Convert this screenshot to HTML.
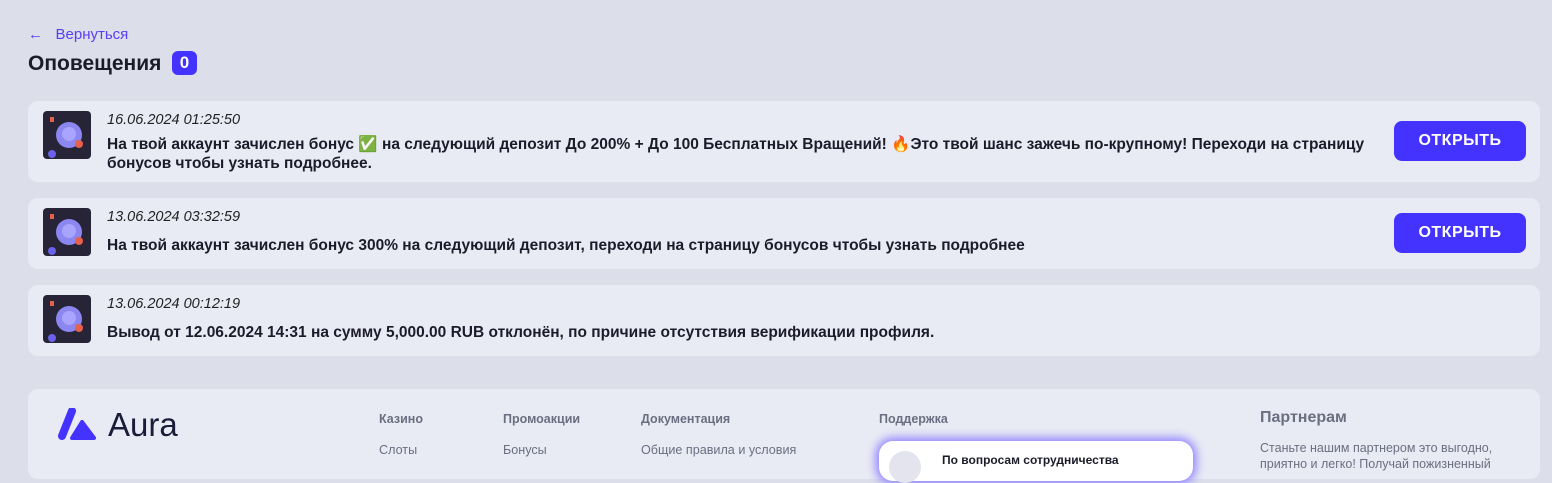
<!DOCTYPE html><html><head><meta charset="utf-8"><style>
*{margin:0;padding:0;box-sizing:border-box}
body{width:1552px;height:462px;overflow:hidden;background:#dcdfea;font-family:"Liberation Sans",sans-serif;color:#1b1b2a;position:relative}
.abs{position:absolute}
.card{position:absolute;left:28px;width:1512px;background:#e9ebf4;border-radius:10px}
.ic{position:absolute;left:15px;top:10px;width:48px;height:48px;background:#262436;border-radius:4px;overflow:hidden}
.date{position:absolute;left:79px;font-style:italic;font-size:14.5px;color:#222}
.txt{position:absolute;left:79px;font-weight:bold;font-size:15.5px;line-height:19px;width:1275px}
.btn{position:absolute;left:1366px;width:132px;height:40px;background:#4433ff;border-radius:8px;color:#fff;font-weight:bold;font-size:16px;text-align:center;line-height:40px;letter-spacing:.5px}
.fh{position:absolute;top:412px;font-size:12.5px;font-weight:bold;color:#6b6e80}
.fl{position:absolute;top:443px;font-size:12.6px;color:#6b6e80}
</style></head><body>
<div class="abs" style="left:28px;top:26px;color:#5b3df5;font-size:15px">←&nbsp;&nbsp;&nbsp;Вернуться</div>
<div class="abs" style="left:28px;top:52px;font-size:21px;font-weight:bold">Оповещения</div>
<div class="abs" style="left:172px;top:51px;width:25px;height:24px;border-radius:6px;background:#4433ff;color:#fff;font-weight:bold;font-size:17px;text-align:center;line-height:24px">0</div>

<div class="card" style="top:101px;height:81px">
<div class="ic"><svg width="48" height="48"><circle cx="26" cy="24" r="13" fill="#8b86f0"/><circle cx="26" cy="23" r="7" fill="#a9a5ff"/><rect x="7" y="6" width="4" height="5" fill="#e8604a"/><circle cx="36" cy="33" r="4" fill="#e8604a"/><circle cx="9" cy="43" r="4" fill="#6a62e8"/></svg></div>
<div class="date" style="top:11px">16.06.2024 01:25:50</div>
<div class="txt" style="top:34px">На твой аккаунт зачислен бонус ✅ на следующий депозит До 200% + До 100 Бесплатных Вращений! 🔥Это твой шанс зажечь по-крупному! Переходи на страницу бонусов чтобы узнать подробнее.</div>
<div class="btn" style="top:20px">ОТКРЫТЬ</div>
</div>

<div class="card" style="top:198px;height:71px">
<div class="ic"><svg width="48" height="48"><circle cx="26" cy="24" r="13" fill="#8b86f0"/><circle cx="26" cy="23" r="7" fill="#a9a5ff"/><rect x="7" y="6" width="4" height="5" fill="#e8604a"/><circle cx="36" cy="33" r="4" fill="#e8604a"/><circle cx="9" cy="43" r="4" fill="#6a62e8"/></svg></div>
<div class="date" style="top:11px">13.06.2024 03:32:59</div>
<div class="txt" style="top:38px">На твой аккаунт зачислен бонус 300% на следующий депозит, переходи на страницу бонусов чтобы узнать подробнее</div>
<div class="btn" style="top:15px">ОТКРЫТЬ</div>
</div>

<div class="card" style="top:285px;height:71px">
<div class="ic"><svg width="48" height="48"><circle cx="26" cy="24" r="13" fill="#8b86f0"/><circle cx="26" cy="23" r="7" fill="#a9a5ff"/><rect x="7" y="6" width="4" height="5" fill="#e8604a"/><circle cx="36" cy="33" r="4" fill="#e8604a"/><circle cx="9" cy="43" r="4" fill="#6a62e8"/></svg></div>
<div class="date" style="top:11px">13.06.2024 00:12:19</div>
<div class="txt" style="top:38px">Вывод от 12.06.2024 14:31 на сумму 5,000.00 RUB отклонён, по причине отсутствия верификации профиля.</div>
</div>

<div class="card" style="top:389px;height:90px"></div>
<svg class="abs" style="left:58px;top:408px" width="42" height="34"><path d="M14 3 L4 28" stroke="#4433ff" stroke-width="8" stroke-linecap="round"/><path d="M24 14 L36 30 L14 30 Z" fill="#4433ff" stroke="#4433ff" stroke-width="4" stroke-linejoin="round"/></svg>
<div class="abs" style="left:108px;top:406px;font-size:33px;color:#1b1b3a">Aura</div>
<div class="fh" style="left:379px">Казино</div><div class="fl" style="left:379px">Слоты</div>
<div class="fh" style="left:503px">Промоакции</div><div class="fl" style="left:503px">Бонусы</div>
<div class="fh" style="left:641px">Документация</div><div class="fl" style="left:641px">Общие правила и условия</div>
<div class="fh" style="left:879px">Поддержка</div>
<div class="abs" style="left:879px;top:441px;width:314px;height:40px;background:#fff;border-radius:14px;box-shadow:0 0 10px 3px #8b7cff"><div style="position:absolute;left:63px;top:12px;font-size:12px;font-weight:bold">По вопросам сотрудничества</div><div style="position:absolute;left:10px;top:10px;width:32px;height:32px;border-radius:50%;background:#e3e4ee"></div></div>
<div class="abs" style="left:1260px;top:409px;font-size:16px;font-weight:bold;color:#6b6e80">Партнерам</div>
<div class="abs" style="left:1260px;top:440px;font-size:12.5px;color:#6b6e80;width:270px;line-height:16px">Станьте нашим партнером это выгодно, приятно и легко! Получай пожизненный</div>
</body></html>
